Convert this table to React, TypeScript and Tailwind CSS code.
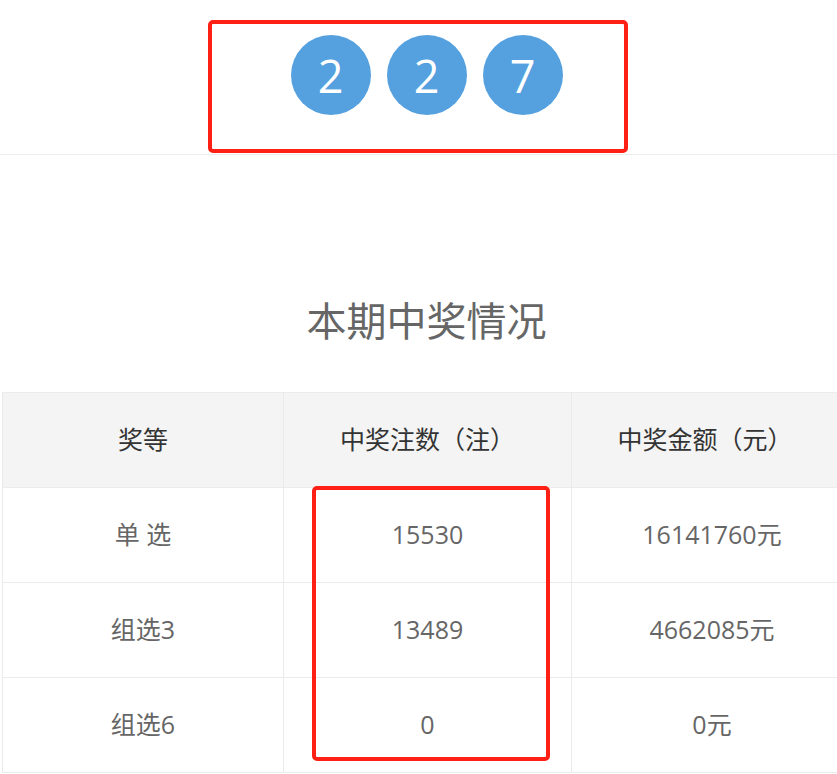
import React from 'react'

const balls = ['2', '2', '7']

const rows = [
  { level: '单 选', count: '15530', money: '16141760元' },
  { level: '组选3', count: '13489', money: '4662085元' },
  { level: '组选6', count: '0', money: '0元' },
]

export default function App() {
  return (
    <div
      className="relative w-[837px] h-[774px] overflow-hidden bg-white"
      style={{ fontFamily: '"Open Sans", "Noto Sans CJK SC", sans-serif' }}
    >
      {/* 开奖号码 */}
      <div className="h-[155px] border-b border-[#ececec] flex justify-center pt-[35px]">
        <div className="flex gap-[16px] ml-[16px]">
          {balls.map((n, i) => (
            <div
              key={i}
              className="w-[80px] h-[80px] rounded-full bg-[#55a0df] text-white flex items-center justify-center text-[45px] leading-none"
            >
              {n}
            </div>
          ))}
        </div>
      </div>

      <h2 className="mt-[146px] text-center text-[40px] leading-none text-[#666] pl-[16px]">
        本期中奖情况
      </h2>

      <div className="mt-[51px] ml-[2px]">
        <table className="w-[837px] border-collapse table-fixed text-[25px]">
          <colgroup>
            <col className="w-[281px]" />
            <col className="w-[288px]" />
            <col />
          </colgroup>
          <thead>
            <tr className="h-[95px] bg-[#f4f4f4] text-[#333]">
              <th className="font-normal border border-[#ebebeb]">奖等</th>
              <th className="font-normal border border-[#ebebeb]">中奖注数（注）</th>
              <th className="font-normal border border-[#ebebeb]">中奖金额（元）</th>
            </tr>
          </thead>
          <tbody className="text-[#666]">
            {rows.map((r) => (
              <tr key={r.level} className="h-[95px]">
                <td className="text-center border border-[#ebebeb]">{r.level}</td>
                <td className="text-center border border-[#ebebeb]">{r.count}</td>
                <td className="text-center border border-[#ebebeb] pl-[14px]">{r.money}</td>
              </tr>
            ))}
          </tbody>
        </table>
      </div>

      {/* 标注框 */}
      <div className="absolute left-[208px] top-[20px] w-[420px] h-[133px] border-[4px] border-[#ff2015] rounded-[5px]" />
      <div className="absolute left-[312px] top-[486px] w-[238px] h-[275px] border-[4px] border-[#ff2015] rounded-[5px]" />
    </div>
  )
}
